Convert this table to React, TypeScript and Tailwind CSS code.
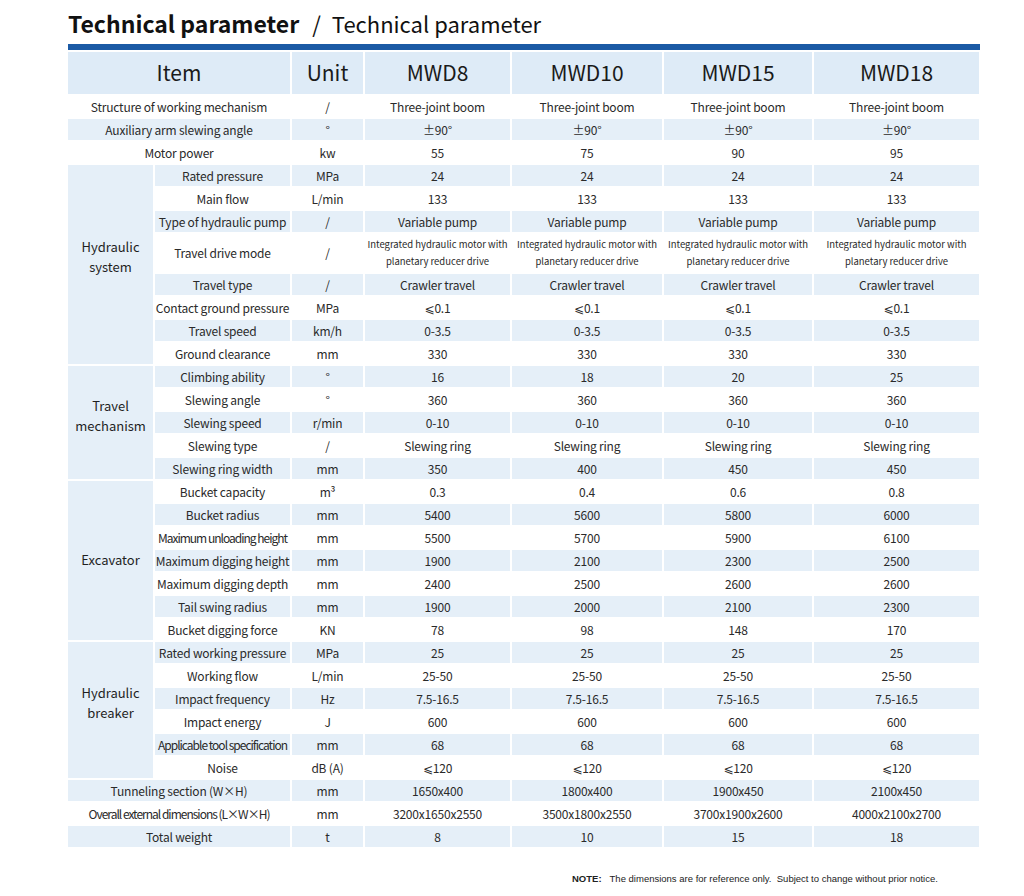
import React from "react";

const FONT = { fontFamily: '"Noto Sans CJK SC", "Noto Sans", "DejaVu Sans", sans-serif' };

type Row = { label: string; unit: string; vals: string[]; tight?: boolean; small?: boolean };
type Group = { name: string[]; pad: string; rows: Row[] } | { single: Row };

const same = (v: string) => [v, v, v, v];

const data: Group[] = [
  { single: { label: "Structure of working mechanism", unit: "/", vals: same("Three-joint boom") } },
  { single: { label: "Auxiliary arm slewing angle", unit: "°", vals: same("±90°") } },
  { single: { label: "Motor power", unit: "kw", vals: ["55", "75", "90", "95"] } },
  {
    name: ["Hydraulic", "system"],
    pad: "pb-[16px]",
    rows: [
      { label: "Rated pressure", unit: "MPa", vals: same("24") },
      { label: "Main flow", unit: "L/min", vals: same("133") },
      { label: "Type of hydraulic pump", unit: "/", vals: same("Variable pump") },
      { label: "Travel drive mode", unit: "/", vals: same("Integrated hydraulic motor with\nplanetary reducer drive"), small: true },
      { label: "Travel type", unit: "/", vals: same("Crawler travel") },
      { label: "Contact ground pressure", unit: "MPa", vals: same("⩽0.1") },
      { label: "Travel speed", unit: "km/h", vals: same("0-3.5") },
      { label: "Ground clearance", unit: "mm", vals: same("330") },
    ],
  },
  {
    name: ["Travel", "mechanism"],
    pad: "pb-[14px]",
    rows: [
      { label: "Climbing ability", unit: "°", vals: ["16", "18", "20", "25"] },
      { label: "Slewing angle", unit: "°", vals: same("360") },
      { label: "Slewing speed", unit: "r/min", vals: same("0-10") },
      { label: "Slewing type", unit: "/", vals: same("Slewing ring") },
      { label: "Slewing ring width", unit: "mm", vals: ["350", "400", "450", "450"] },
    ],
  },
  {
    name: ["Excavator"],
    pad: "pb-[2px]",
    rows: [
      { label: "Bucket capacity", unit: "m³", vals: ["0.3", "0.4", "0.6", "0.8"] },
      { label: "Bucket radius", unit: "mm", vals: ["5400", "5600", "5800", "6000"] },
      { label: "Maximum unloading height", unit: "mm", vals: ["5500", "5700", "5900", "6100"], tight: true },
      { label: "Maximum digging height", unit: "mm", vals: ["1900", "2100", "2300", "2500"] },
      { label: "Maximum digging depth", unit: "mm", vals: ["2400", "2500", "2600", "2600"] },
      { label: "Tail swing radius", unit: "mm", vals: ["1900", "2000", "2100", "2300"] },
      { label: "Bucket digging force", unit: "KN", vals: ["78", "98", "148", "170"] },
    ],
  },
  {
    name: ["Hydraulic", "breaker"],
    pad: "pb-[14px]",
    rows: [
      { label: "Rated working pressure", unit: "MPa", vals: same("25") },
      { label: "Working flow", unit: "L/min", vals: same("25-50") },
      { label: "Impact frequency", unit: "Hz", vals: same("7.5-16.5") },
      { label: "Impact energy", unit: "J", vals: same("600") },
      { label: "Applicable tool specification", unit: "mm", vals: same("68"), tight: true },
      { label: "Noise", unit: "dB (A)", vals: same("⩽120") },
    ],
  },
  { single: { label: "Tunneling section (W×H)", unit: "mm", vals: ["1650x400", "1800x400", "1900x450", "2100x450"] } },
  {
    single: {
      label: "Overall external dimensions (L×W×H)",
      unit: "mm",
      vals: ["3200x1650x2550", "3500x1800x2550", "3700x1900x2600", "4000x2100x2700"],
      tight: true,
    },
  },
  { single: { label: "Total weight", unit: "t", vals: ["8", "10", "15", "18"] } },
];

const BLUE = "bg-[#e5eff8]";
const NORMAL = "text-[12px] leading-[16px] tracking-[-0.2px] whitespace-nowrap";
const TIGHT = "text-[12px] leading-[16px] tracking-[-1px] whitespace-nowrap";
const SMALL = "text-[9.5px] leading-[17px] tracking-[0px] whitespace-pre";

export default function App() {
  const cells: React.ReactNode[] = [];
  let idx = 0;
  let key = 0;
  const cellBase = "flex items-center justify-center text-center text-[#2a2a2a] overflow-hidden";

  const pushRow = (r: Row, withGroup: boolean) => {
    const bg = idx % 2 === 1 ? BLUE : "bg-white";
    idx++;
    cells.push(
      <div key={key++} className={`${cellBase} ${bg} ${withGroup ? "" : "col-span-2"} ${r.tight ? TIGHT : NORMAL}`}>
        {r.label}
      </div>
    );
    cells.push(
      <div key={key++} className={`${cellBase} ${bg} ${NORMAL}`}>
        {r.unit}
      </div>
    );
    r.vals.forEach((v) => {
      cells.push(
        <div key={key++} className={`${cellBase} ${bg} ${r.small ? SMALL : NORMAL}`}>
          {v}
        </div>
      );
    });
  };

  const spanClass: Record<number, string> = {
    5: "row-span-5",
    6: "row-span-6",
    7: "row-span-7",
    8: "row-span-8",
  };

  data.forEach((g) => {
    if ("single" in g) {
      pushRow(g.single, false);
    } else {
      cells.push(
        <div
          key={key++}
          className={`${spanClass[g.rows.length]} ${BLUE} ${g.pad} flex flex-col items-center justify-center text-[13px] leading-[20px] text-[#1f1f1f]`}
        >
          {g.name.map((n) => (
            <span key={n}>{n}</span>
          ))}
        </div>
      );
      g.rows.forEach((r) => pushRow(r, true));
    }
  });

  const headers = ["Unit", "MWD8", "MWD10", "MWD15", "MWD18"];

  return (
    <div className="w-[1024px] h-[896px] bg-white relative" style={FONT}>
      <div className="pl-[68px] pt-[8px] flex items-baseline text-[#111] h-[44px]">
        <span className="text-[23px] font-bold leading-[30px]">Technical parameter</span>
        <span className="text-[22px] leading-[30px] ml-[13px] mr-[11px]">/</span>
        <span className="text-[22px] leading-[30px]">Technical parameter</span>
      </div>
      <div className="ml-[68px] w-[912px] h-[6px] bg-[#1b5aa5]" />
      <div className="ml-[68px] mt-[2px] w-[912px] grid gap-[2px] grid-cols-[85px_135px_71px_145px_150px_148px_165px] grid-rows-[42px_repeat(6,21px)_38px_repeat(25,21px)]">
        <div className="col-span-2 bg-[#deebf7] flex items-center justify-center text-[21px] text-[#1a1a1a]">
          Item
        </div>
        {headers.map((h) => (
          <div key={h} className="bg-[#deebf7] flex items-center justify-center text-[21px] text-[#1a1a1a]">
            {h}
          </div>
        ))}
        {cells}
      </div>
      <div
        className="absolute left-[572px] top-[872px] text-[9.5px] text-[#222] flex gap-[8px]"
        style={{ fontFamily: '"Liberation Sans", Arial, sans-serif' }}
      >
        <span className="font-bold">NOTE:</span>
        <span>The dimensions are for reference only.&nbsp; Subject to change without prior notice.</span>
      </div>
    </div>
  );
}
